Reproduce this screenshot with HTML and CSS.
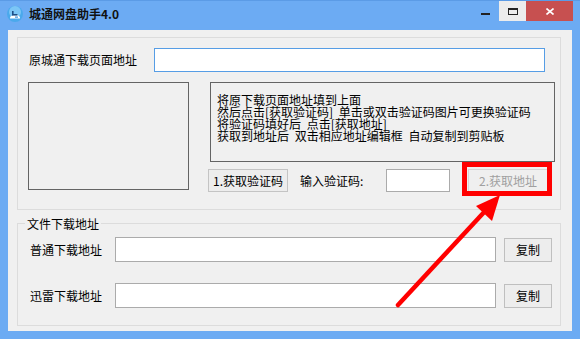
FILE: index.html
```html
<!DOCTYPE html>
<html>
  <head>
    <meta charset="utf-8" />
    <link rel="stylesheet" href="styles.css">
  </head>

  <body>
    <div class="window">
      <div class="titlebar">
        <svg class="app-icon" width="16" height="16" viewBox="0 0 16 16">
          <circle cx="8" cy="8" r="8" fill="#4aa9ec" />
          <circle cx="8" cy="6" r="6" fill="#7cc6f6" />
          <path d="M3 12.5 Q3 9.5 5.5 9.8 Q6.5 7.8 8.8 8.6 Q11 8 11.6 10 Q13.5 10.2 13 12.5 Z" fill="#fff" />
          <rect x="5" y="5" width="1.6" height="4" fill="#1d4f86" />
          <rect x="5" y="8" width="5.5" height="1.6" fill="#1d4f86" />
          <rect x="8" y="10.5" width="3" height="1.2" fill="#3c8fd8" />
        </svg>
        <span class="title">城通网盘助手4.0</span>
        <div class="caption-btns">
          <span class="cap-btn cap-min"><i></i></span>
          <span class="cap-btn cap-max"><i></i></span>
          <span class="cap-btn cap-close">
            <svg width="8" height="7" viewBox="0 0 8 7">
              <path d="M0.5 0.5 L7.5 6.5 M7.5 0.5 L0.5 6.5" stroke="#fff" stroke-width="1.6" />
            </svg>
          </span>
        </div>
      </div>

      <div class="client">
        <div class="group group-top">
          <div class="row-url">
            <label class="url-label">原城通下载页面地址</label>
            <input class="field field-url" type="text" />
          </div>

          <div class="row-captcha">
            <div class="captcha-img"></div>
            <div class="captcha-side">
              <div class="hint">
                <div>将原下载页面地址填到上面</div>
                <div>然后点击[获取验证码] 单击或双击验证码图片可更换验证码</div>
                <div>将验证码填好后 点击[获取地址]</div>
                <div>获取到地址后 双击相应地址编辑框 自动复制到剪贴板</div>
              </div>
              <div class="controls">
                <button class="btn btn-captcha">1.获取验证码</button>
                <span class="code-label">输入验证码:</span>
                <input class="field field-code" type="text" />
                <span class="marked">
                  <button class="btn btn-fetch" disabled>2.获取地址</button>
                  <span class="mark"></span>
                </span>
              </div>
            </div>
          </div>
        </div>

        <div class="group group-files">
          <div class="legend">文件下载地址</div>
          <div class="file-row">
            <label class="file-label">普通下载地址</label>
            <input class="field field-link" type="text" />
            <button class="btn btn-copy">复制</button>
          </div>
          <div class="file-row file-row-2">
            <label class="file-label">迅雷下载地址</label>
            <input class="field field-link" type="text" />
            <button class="btn btn-copy">复制</button>
          </div>
        </div>
      </div>

      <svg class="arrow" width="580" height="339" viewBox="0 0 580 339">
        <line x1="398" y1="305" x2="487" y2="209" stroke="#ff0000" stroke-width="4.5" stroke-linecap="round" />
        <polygon points="500,195 476,206 492,221" fill="#ff0000" />
      </svg>
    </div>
  </body>
</html>
```

FILE: styles.css
```css
* {
  box-sizing: border-box;
}

body {
  margin: 0;
  font-family: "Noto Sans CJK SC", "Noto Sans", sans-serif;
  font-size: 12px;
  color: #000;
}

.window {
  position: relative;
  width: 580px;
  height: 339px;
  background-color: #6cabf3;
  border-top: 1px solid #5b9be6;
  display: flex;
  flex-direction: column;
}

.titlebar {
  height: 29px;
  display: flex;
  align-items: flex-start;
  padding-right: 7px;
}

.app-icon {
  margin: 5px 0 0 7px;
}

.title {
  margin: 6px 0 0 6px;
  line-height: 14px;
  font-weight: bold;
  color: #111;
}

.caption-btns {
  margin-left: auto;
  display: flex;
}

.cap-btn {
  width: 27px;
  height: 20px;
  display: flex;
  justify-content: center;
  align-items: center;
}

.cap-min {
  align-items: flex-start;
  padding-top: 12px;
}

.cap-min i {
  width: 9px;
  height: 2px;
  background-color: #222;
}

.cap-max {
  background-color: #ececec;
}

.cap-max i {
  width: 10px;
  height: 7px;
  border: 1px solid #222;
  border-top-width: 2px;
}

.cap-close {
  width: 47px;
  background-color: #c75050;
}

.cap-close svg {
  display: block;
}

.client {
  margin: 0 8px;
  height: 301px;
  background-color: #f0f0f0;
  padding: 7px 0 0 9px;
}

.group {
  width: 544px;
  border: 1px solid #dcdcdc;
}

.group-top {
  height: 173px;
}

.row-url {
  display: flex;
  align-items: center;
  margin-top: 10px;
  padding-left: 11px;
}

.url-label {
  width: 125px;
  line-height: 14px;
}

.field {
  border: 1px solid #ababab;
  background-color: #fff;
  padding: 0 3px;
  font: inherit;
  outline: none;
}

.field-url {
  width: 391px;
  height: 24px;
  border-color: #569de5;
}

.row-captcha {
  display: flex;
  margin-top: 10px;
}

.captcha-img {
  width: 161px;
  height: 108px;
  margin-left: 10px;
  border: 1px solid #646464;
}

.captcha-side {
  margin-left: 19px;
}

.hint {
  width: 345px;
  height: 80px;
  margin-left: 2px;
  border: 1px solid #646464;
  padding: 11px 0 0 6px;
  line-height: 12px;
  word-spacing: 3px;
  white-space: nowrap;
}

.controls {
  display: flex;
  align-items: center;
  margin-top: 7px;
}

.btn {
  font: inherit;
  padding: 0;
  border: 1px solid #c4c4c4;
  background-color: #ededed;
  color: #000;
}

.btn-captcha {
  width: 80px;
  height: 23px;
}

.code-label {
  width: 86px;
  margin-left: 12px;
  line-height: 14px;
}

.field-code {
  width: 64px;
  height: 23px;
}

.marked {
  position: relative;
  margin-left: 18px;
  display: flex;
}

.btn-fetch {
  width: 80px;
  height: 23px;
  color: #a0a0a0;
  border-color: #d6d6d6;
  background-color: #efefef;
}

.mark {
  position: absolute;
  left: -6px;
  top: -7px;
  width: 90px;
  height: 34px;
  border: 5px solid #ff0000;
}

.group-files {
  height: 103px;
  margin-top: 13px;
}

.legend {
  width: fit-content;
  margin: -7px 0 0 7px;
  padding: 0 2px;
  line-height: 14px;
  background-color: #f0f0f0;
}

.file-row {
  display: flex;
  align-items: center;
  margin-top: 6px;
  padding-left: 12px;
}

.file-row-2 {
  margin-top: 21px;
}

.file-label {
  width: 85px;
  line-height: 14px;
}

.field-link {
  width: 381px;
  height: 25px;
}

.btn-copy {
  width: 48px;
  height: 24px;
  margin-left: 8px;
  border-color: #bfbfbf;
}

.arrow {
  position: absolute;
  left: 0;
  top: -1px;
  pointer-events: none;
}
```
